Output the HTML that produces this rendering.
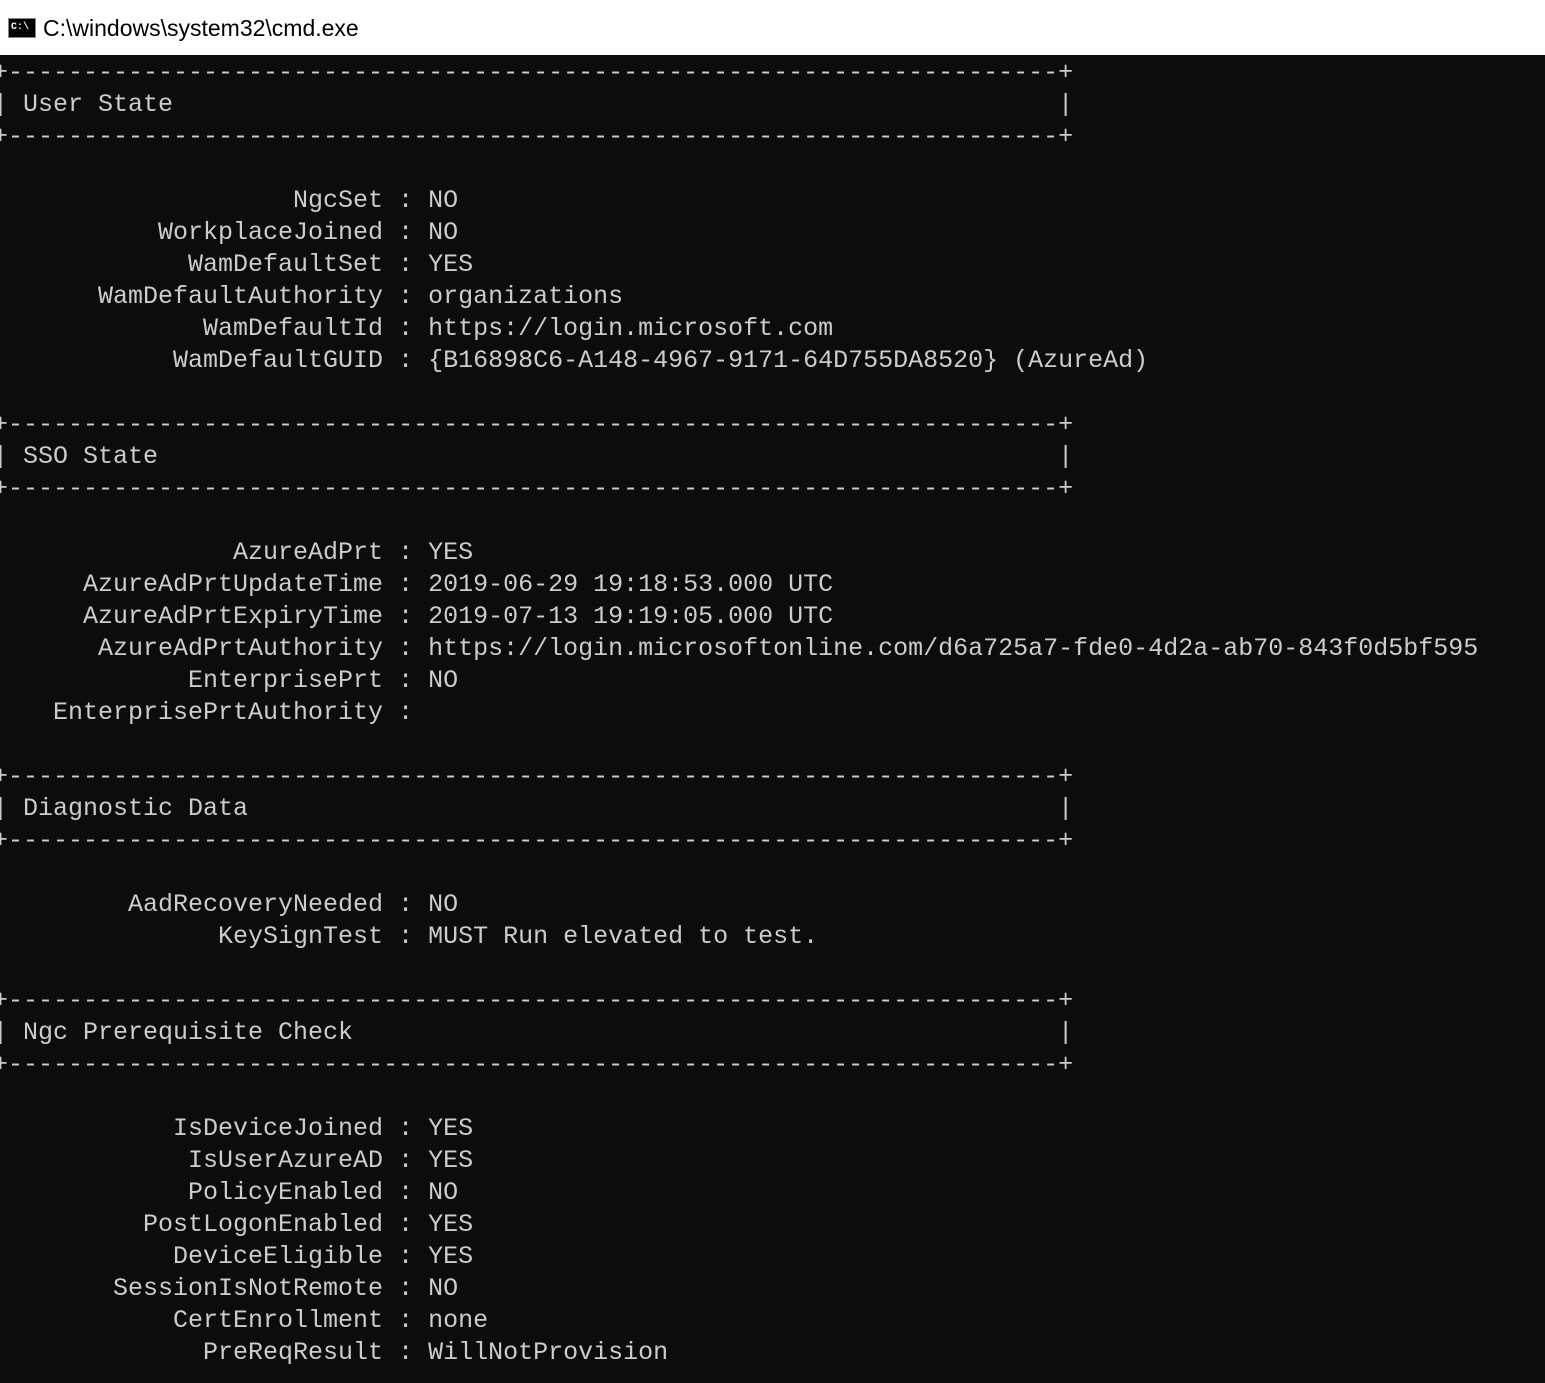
<!DOCTYPE html>
<html><head><meta charset="utf-8">
<style>
html,body{margin:0;padding:0;}
body{width:1545px;height:1383px;background:#0c0c0c;overflow:hidden;position:relative;}
.title{position:absolute;left:0;top:0;width:1545px;height:55px;background:#fff;}
.title .ic{position:absolute;left:8px;top:18px;width:28px;height:20px;background:#000;border:1px solid #888;box-sizing:border-box;color:#fff;font:bold 10px "Liberation Mono",monospace;line-height:18px;text-indent:2px;}
.title .t{position:absolute;left:43px;top:15px;font:23px "Liberation Sans",sans-serif;color:#000;}
pre{position:absolute;left:-7px;top:57px;margin:0;font:25px/32px "Liberation Mono",monospace;color:#cccccc;white-space:pre;}
</style></head><body>
<div class="title"><div class="ic">C:\</div><div class="t">C:\windows\system32\cmd.exe</div></div>
<pre>+----------------------------------------------------------------------+
| User State                                                           |
+----------------------------------------------------------------------+

                    NgcSet : NO
           WorkplaceJoined : NO
             WamDefaultSet : YES
       WamDefaultAuthority : organizations
              WamDefaultId : https://login.microsoft.com
            WamDefaultGUID : {B16898C6-A148-4967-9171-64D755DA8520} (AzureAd)

+----------------------------------------------------------------------+
| SSO State                                                            |
+----------------------------------------------------------------------+

                AzureAdPrt : YES
      AzureAdPrtUpdateTime : 2019-06-29 19:18:53.000 UTC
      AzureAdPrtExpiryTime : 2019-07-13 19:19:05.000 UTC
       AzureAdPrtAuthority : https://login.microsoftonline.com/d6a725a7-fde0-4d2a-ab70-843f0d5bf595
             EnterprisePrt : NO
    EnterprisePrtAuthority :

+----------------------------------------------------------------------+
| Diagnostic Data                                                      |
+----------------------------------------------------------------------+

         AadRecoveryNeeded : NO
               KeySignTest : MUST Run elevated to test.

+----------------------------------------------------------------------+
| Ngc Prerequisite Check                                               |
+----------------------------------------------------------------------+

            IsDeviceJoined : YES
             IsUserAzureAD : YES
             PolicyEnabled : NO
          PostLogonEnabled : YES
            DeviceEligible : YES
        SessionIsNotRemote : NO
            CertEnrollment : none
              PreReqResult : WillNotProvision
</pre>
</body></html>
